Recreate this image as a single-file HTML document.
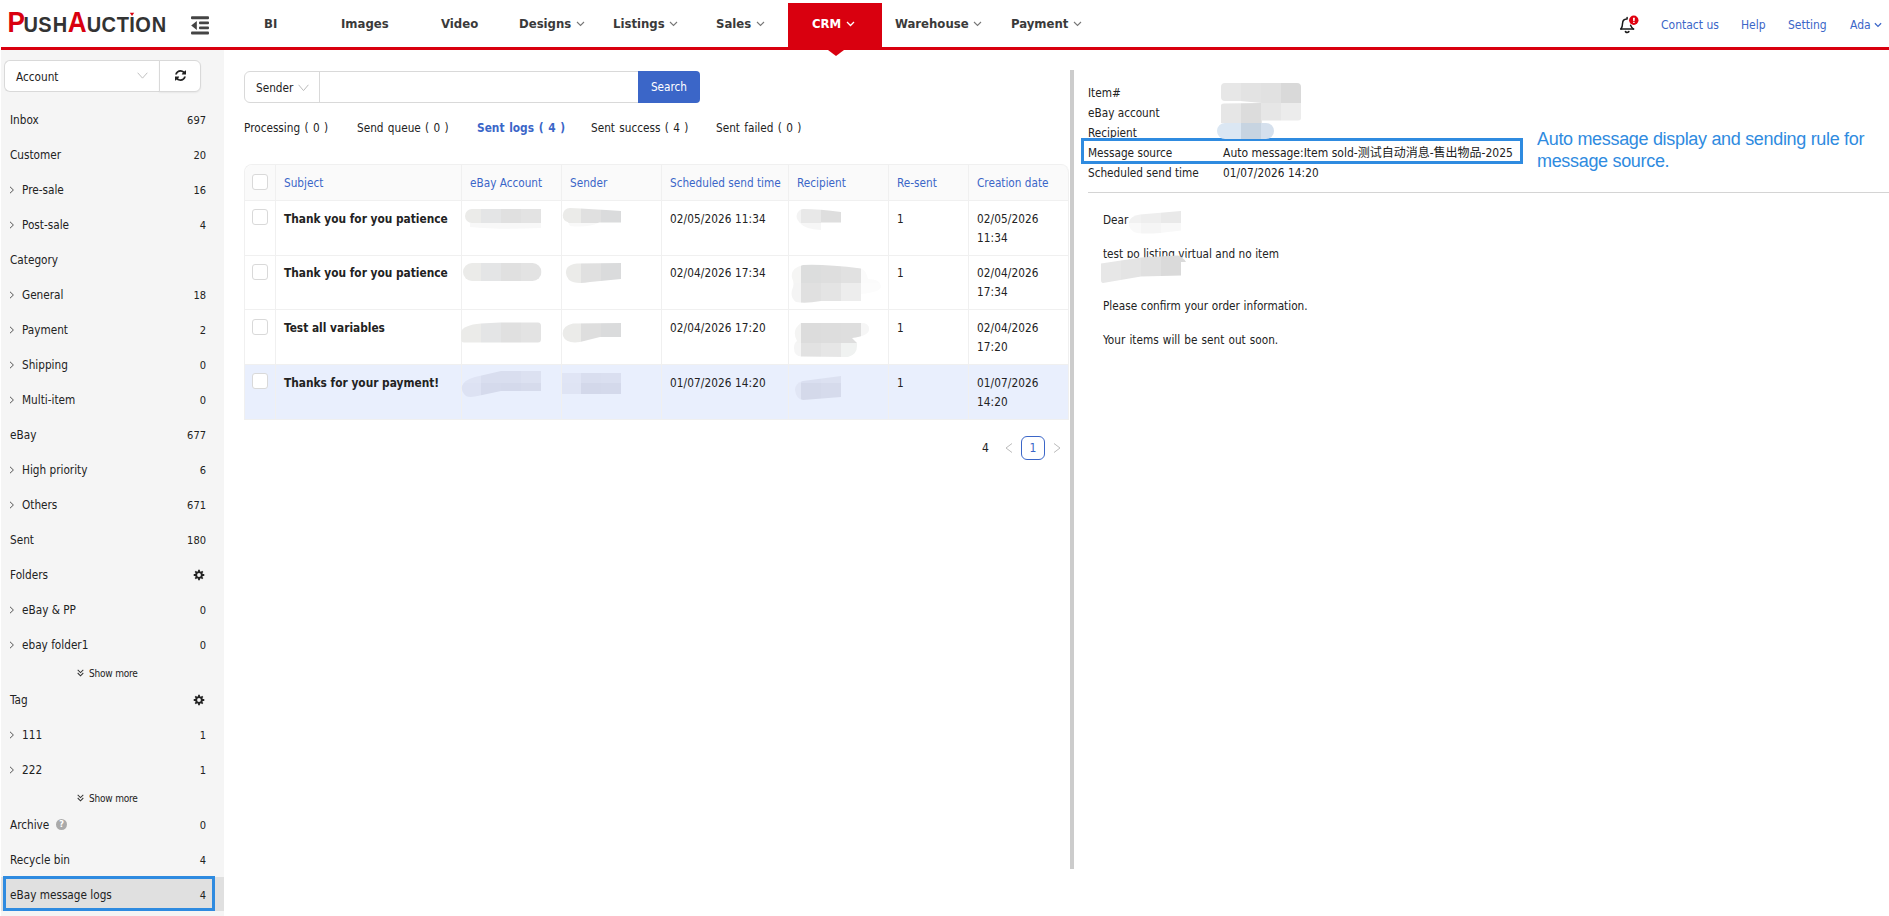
<!DOCTYPE html>
<html lang="en">
<head>
<meta charset="utf-8">
<title>PushAuction - CRM - eBay message logs</title>
<style>
*{box-sizing:border-box;margin:0;padding:0}
html,body{width:1889px;height:916px;overflow:hidden;background:#fff}
body{position:relative;font-family:"DejaVu Sans Condensed","Liberation Sans","Noto Sans CJK SC",sans-serif;font-size:11.7px;color:#222;line-height:14px}
.abs{position:absolute}
/* header */
#hdr{position:absolute;left:0;top:0;width:1889px;height:50px;background:#fff}
#redline{position:absolute;left:1px;top:47px;width:1888px;height:3px;background:#d9000f}
#logo{position:absolute;left:0;top:0}
.nav{position:absolute;top:0;height:47px;font-family:"DejaVu Sans Condensed","Liberation Sans",sans-serif;font-weight:bold;font-size:13px;color:#3a3a3a;white-space:nowrap;line-height:47px}
.nav svg{margin-left:4.5px;vertical-align:middle;position:relative;top:-1px}
#crm{position:absolute;left:788px;top:3px;width:94px;height:45px;background:#d9000f}
#crmtri{position:absolute;left:828px;top:50px;width:0;height:0;border-left:8px solid transparent;border-right:8px solid transparent;border-top:6px solid #d9000f}
.toplink{position:absolute;top:18px;color:#3b66c8;font-size:12px;white-space:nowrap}
/* sidebar */
#side{position:absolute;left:1px;top:50px;width:223px;height:866px;background:#f5f5f5}
.si{position:absolute;left:0;width:223px;height:35px;line-height:37px;white-space:nowrap;color:#222}
.si .t{position:absolute;left:9px}
.si.sub .t{left:21px}
.si .n{position:absolute;right:18px;font-size:11px}
.si .ch{position:absolute;left:8px;top:14px}
#acct{position:absolute;left:3px;top:10px;width:156px;height:32px;border:1px solid #d9d9d9;border-right:0;border-radius:6px 0 0 6px;background:#fff;line-height:32px}
#acct span{position:absolute;left:11px}
#refresh{position:absolute;left:158px;top:10px;width:42px;height:32px;border:1px solid #d9d9d9;border-radius:0 6px 6px 0;background:#fff;box-shadow:0 1px 2px rgba(0,0,0,.06)}
.si .gear{position:absolute;left:192.3px;top:11.7px}
.si .q{position:absolute;left:55px;top:12px;width:11px;height:11px;border-radius:50%;background:#aaa;color:#fff;font-size:9px;font-weight:bold;line-height:11px;text-align:center}
.si.sel{background:#e0e0e0;height:34px}
.si.sel:before{content:"";box-sizing:border-box;position:absolute;left:2px;top:-1px;width:212px;height:35px;border:3px solid #2f8be0}
.more{position:absolute;left:0;width:223px;height:20px;line-height:20px;font-size:10px;letter-spacing:-.2px;color:#222;padding-left:76px;white-space:nowrap}
#search{position:absolute;left:244px;top:71px;width:456px;height:32px}
#search .sel{position:absolute;left:0;top:0;width:76px;height:32px;border:1px solid #d9d9d9;border-radius:6px 0 0 6px;line-height:32px;padding-left:11px;white-space:nowrap}
#search .inp{position:absolute;left:75px;top:0;width:320px;height:32px;border:1px solid #d9d9d9;border-right:0}
#search .btn{position:absolute;left:394px;top:0;width:62px;height:32px;background:#3b66c8;color:#fff;border-radius:0 4px 4px 0;text-align:center;line-height:33px}
.tab{position:absolute;top:121px;line-height:15px;white-space:nowrap;color:#222;word-spacing:1px}
.tab.act{color:#3b66c8;font-weight:bold;font-size:11.8px}
#tbl{position:absolute;left:244px;top:164px;width:824px;border-collapse:separate;border-spacing:0;table-layout:fixed;border-left:1px solid #f0f0f0;border-top:1px solid #f0f0f0;border-radius:8px 8px 0 0}
#tbl th{height:36px;background:#fafafa;color:#3b66c8;font-weight:normal;text-align:left;padding:0 8px;border-right:1px solid #f0f0f0;border-bottom:1px solid #f0f0f0;white-space:nowrap;vertical-align:middle}
#tbl th:first-child{border-top-left-radius:8px}
#tbl th:last-child{border-top-right-radius:8px}
#tbl td{height:55px;padding:9px 8px 0 8px;border-right:1px solid #f0f0f0;border-bottom:1px solid #f0f0f0;vertical-align:top;line-height:19px;color:#222}
#tbl td.b{font-weight:bold;font-size:11.8px;white-space:nowrap;padding-left:8px}
#tbl .c{padding:0;text-align:center}
#tbl td.c{padding-top:8px}
#tbl th.c{vertical-align:top;padding-top:9px}
#tbl tr.hl td{background:#e9effd}
#tbl tbody tr:nth-child(2) td{height:54px;padding-top:8px}
#tbl tbody tr:nth-child(2) td.c{padding-top:8px}
#tbl tbody tr:nth-child(3) td.c{padding-top:9px}
#tbl td.d{letter-spacing:.1px}
.cb{display:block;width:16px;height:16px;border:1px solid #d9d9d9;border-radius:3px;background:#fff;margin:0 auto}
.blob{position:absolute}
.lbl{position:absolute;left:1088px;line-height:15px;white-space:nowrap;color:#222}
.val{position:absolute;left:1223px;line-height:15px;white-space:nowrap;color:#222}
#hlbox{position:absolute;left:1081px;top:138px;width:442px;height:26px;border:3px solid #2f8be0}
#note{position:absolute;left:1537px;top:128px;font-family:"Liberation Sans",sans-serif;font-size:18px;line-height:22px;letter-spacing:-0.32px;color:#2f8be0;white-space:nowrap}
.msg{position:absolute;left:1103px;line-height:15px;white-space:nowrap;color:#222;word-spacing:.8px}
#blobs{position:absolute;left:0;top:0;pointer-events:none}
</style>
</head>
<body>
<div id="hdr"></div>
<div id="redline"></div>
<svg id="logo" width="175" height="46" viewBox="0 0 175 46"><text transform="scale(0.89,1)" y="32" text-anchor="middle" font-family="Liberation Sans, sans-serif" font-weight="bold" fill="#333"><tspan x="18.31" fill="#d9000f" font-size="29.4">P</tspan><tspan x="34.55" font-size="22.5">U</tspan><tspan x="50.62" font-size="22.5">S</tspan><tspan x="67.47" font-size="22.5">H</tspan><tspan x="86.69" fill="#d9000f" font-size="29.4">A</tspan><tspan x="105.56" font-size="22.5">U</tspan><tspan x="122.25" font-size="22.5">C</tspan><tspan x="138.09" font-size="22.5">T</tspan><tspan x="148.48" font-size="22.5">I</tspan><tspan x="160.84" font-size="22.5">O</tspan><tspan x="178.71" font-size="22.5">N</tspan></text><path d="M129.8 12.8 L134.2 12.8 L132 16 Z" fill="#d9000f"/></svg>
<svg class="abs" style="left:190px;top:15px" width="20" height="21" viewBox="0 0 20 21"><g fill="#444"><rect x="1" y="1.3" width="18" height="3" rx="1"/><rect x="9" y="6.6" width="10" height="2.6" rx="1"/><rect x="9" y="11.6" width="10" height="2.6" rx="1"/><rect x="1" y="16.4" width="18" height="3" rx="1"/><path d="M1.2 10.4 L6.8 6 L6.8 14.9 Z"/></g></svg>
<div id="crm"></div><div id="crmtri"></div>
<div class="nav" style="left:264px">BI</div>
<div class="nav" style="left:341px">Images</div>
<div class="nav" style="left:441px">Video</div>
<div class="nav" style="left:519px">Designs<svg width="9" height="6" viewBox="0 0 9 6"><path d="M1 1 L4.5 4.5 L8 1" fill="none" stroke="#777" stroke-width="1.1"/></svg></div>
<div class="nav" style="left:613px">Listings<svg width="9" height="6" viewBox="0 0 9 6"><path d="M1 1 L4.5 4.5 L8 1" fill="none" stroke="#777" stroke-width="1.1"/></svg></div>
<div class="nav" style="left:716px">Sales<svg width="9" height="6" viewBox="0 0 9 6"><path d="M1 1 L4.5 4.5 L8 1" fill="none" stroke="#777" stroke-width="1.1"/></svg></div>
<div class="nav" style="left:812px;color:#fff">CRM<svg width="9" height="6" viewBox="0 0 9 6"><path d="M1 1 L4.5 4.5 L8 1" fill="none" stroke="#fff" stroke-width="1.3"/></svg></div>
<div class="nav" style="left:895px">Warehouse<svg width="9" height="6" viewBox="0 0 9 6"><path d="M1 1 L4.5 4.5 L8 1" fill="none" stroke="#777" stroke-width="1.1"/></svg></div>
<div class="nav" style="left:1011px">Payment<svg width="9" height="6" viewBox="0 0 9 6"><path d="M1 1 L4.5 4.5 L8 1" fill="none" stroke="#777" stroke-width="1.1"/></svg></div>
<svg class="abs" id="bell" style="left:1610px;top:8px" width="40" height="32" viewBox="0 0 40 32"><g fill="none" stroke="#1a1a1a" stroke-width="1.5" stroke-linecap="round" stroke-linejoin="round"><path d="M10.7 21.1 L23.6 21.1"/><path d="M11 21 C12.1 19.4 12.5 17.6 12.6 15 C12.7 12.6 14.2 11.2 16.6 11 L17.1 11 L17.1 9.6"/><path d="M20.6 17.2 C21.2 18.7 22 19.9 23.4 21"/><path d="M15.5 23.6 Q17.1 25.4 18.8 23.6" stroke-width="1.7"/></g><circle cx="23.8" cy="12.2" r="4.7" fill="#e0000f"/><path d="M22.9 9.7 L24.9 9.7 L24.6 13.3 L23.2 13.3 Z M23.2 14 L24.6 14 L24.6 15.1 L23.2 15.1 Z" fill="#fff"/></svg>
<div class="toplink" style="left:1661px">Contact us</div>
<div class="toplink" style="left:1741px">Help</div>
<div class="toplink" style="left:1788px">Setting</div>
<div class="toplink" style="left:1850px">Ada<svg width="8" height="6" viewBox="0 0 9 6" style="margin-left:3px;position:relative;top:-1px"><path d="M1 1 L4.5 4.5 L8 1" fill="none" stroke="#3b66c8" stroke-width="1.4"/></svg></div>
<div id="side">
<div id="acct"><span>Account</span><svg class="abs" style="left:132px;top:11px" width="11" height="7.5" viewBox="0 0 12 8"><path d="M0.7 0.7 L6 6.6 L11.3 0.7" fill="none" stroke="#bbb" stroke-width="1"/></svg></div>
<div id="refresh"><svg width="11" height="11" viewBox="0 0 1536 1536" style="position:absolute;left:14.5px;top:9px"><path fill="#222" d="M1511 928q0 5-1 7-64 268-268 434.500T764 1536q-146 0-282.500-55T238 1324l-129 129q-19 19-45 19t-45-19-19-45V960q0-26 19-45t45-19h448q26 0 45 19t19 45-19 45l-137 137q71 66 161 102t187 36q134 0 250-65t186-179q11-17 53-117 8-23 30-23h192q13 0 22.500 9.500t9.500 22.500zm25-800v448q0 26-19 45t-45 19h-448q-26 0-45-19t-19-45 19-45l138-138Q969 256 768 256q-134 0-250 65T332 500q-11 17-53 117-8 23-30 23H50q-13 0-22.500-9.500T18 608v-7q65-268 270-434.500T768 0q146 0 284 55.500T1297 212l130-129q19-19 45-19t45 19 19 45z"/></svg></div>
<div class="si" style="top:52px"><span class="t">Inbox</span><span class="n">697</span></div>
<div class="si" style="top:87px"><span class="t">Customer</span><span class="n">20</span></div>
<div class="si sub" style="top:122px"><svg class="ch" width="6" height="8" viewBox="0 0 6 8"><path d="M1 0.8 L4.4 4 L1 7.2" fill="none" stroke="#555" stroke-width="1"/></svg><span class="t">Pre-sale</span><span class="n">16</span></div>
<div class="si sub" style="top:157px"><svg class="ch" width="6" height="8" viewBox="0 0 6 8"><path d="M1 0.8 L4.4 4 L1 7.2" fill="none" stroke="#555" stroke-width="1"/></svg><span class="t">Post-sale</span><span class="n">4</span></div>
<div class="si" style="top:192px"><span class="t">Category</span></div>
<div class="si sub" style="top:227px"><svg class="ch" width="6" height="8" viewBox="0 0 6 8"><path d="M1 0.8 L4.4 4 L1 7.2" fill="none" stroke="#555" stroke-width="1"/></svg><span class="t">General</span><span class="n">18</span></div>
<div class="si sub" style="top:262px"><svg class="ch" width="6" height="8" viewBox="0 0 6 8"><path d="M1 0.8 L4.4 4 L1 7.2" fill="none" stroke="#555" stroke-width="1"/></svg><span class="t">Payment</span><span class="n">2</span></div>
<div class="si sub" style="top:297px"><svg class="ch" width="6" height="8" viewBox="0 0 6 8"><path d="M1 0.8 L4.4 4 L1 7.2" fill="none" stroke="#555" stroke-width="1"/></svg><span class="t">Shipping</span><span class="n">0</span></div>
<div class="si sub" style="top:332px"><svg class="ch" width="6" height="8" viewBox="0 0 6 8"><path d="M1 0.8 L4.4 4 L1 7.2" fill="none" stroke="#555" stroke-width="1"/></svg><span class="t">Multi-item</span><span class="n">0</span></div>
<div class="si" style="top:367px"><span class="t">eBay</span><span class="n">677</span></div>
<div class="si sub" style="top:402px"><svg class="ch" width="6" height="8" viewBox="0 0 6 8"><path d="M1 0.8 L4.4 4 L1 7.2" fill="none" stroke="#555" stroke-width="1"/></svg><span class="t">High priority</span><span class="n">6</span></div>
<div class="si sub" style="top:437px"><svg class="ch" width="6" height="8" viewBox="0 0 6 8"><path d="M1 0.8 L4.4 4 L1 7.2" fill="none" stroke="#555" stroke-width="1"/></svg><span class="t">Others</span><span class="n">671</span></div>
<div class="si" style="top:472px"><span class="t">Sent</span><span class="n">180</span></div>
<div class="si" style="top:507px"><span class="t">Folders</span><svg class="gear" width="12" height="12" viewBox="-6 -6 12 12"><path fill="#222" fill-rule="evenodd" d="M-0.94 -3.78 L-0.88 -5.28 L0.88 -5.28 L0.94 -3.78 L2.01 -3.34 L3.11 -4.35 L4.35 -3.11 L3.34 -2.01 L3.78 -0.94 L5.28 -0.88 L5.28 0.88 L3.78 0.94 L3.34 2.01 L4.35 3.11 L3.11 4.35 L2.01 3.34 L0.94 3.78 L0.88 5.28 L-0.88 5.28 L-0.94 3.78 L-2.01 3.34 L-3.11 4.35 L-4.35 3.11 L-3.34 2.01 L-3.78 0.94 L-5.28 0.88 L-5.28 -0.88 L-3.78 -0.94 L-3.34 -2.01 L-4.35 -3.11 L-3.11 -4.35 L-2.01 -3.34 Z M1.90 0 A1.9 1.9 0 1 0 -1.90 0 A1.9 1.9 0 1 0 1.90 0 Z"/></svg></div>
<div class="si sub" style="top:542px"><svg class="ch" width="6" height="8" viewBox="0 0 6 8"><path d="M1 0.8 L4.4 4 L1 7.2" fill="none" stroke="#555" stroke-width="1"/></svg><span class="t">eBay &amp; PP</span><span class="n">0</span></div>
<div class="si sub" style="top:577px"><svg class="ch" width="6" height="8" viewBox="0 0 6 8"><path d="M1 0.8 L4.4 4 L1 7.2" fill="none" stroke="#555" stroke-width="1"/></svg><span class="t">ebay folder1</span><span class="n">0</span></div>
<div class="si" style="top:632px"><span class="t">Tag</span><svg class="gear" width="12" height="12" viewBox="-6 -6 12 12"><path fill="#222" fill-rule="evenodd" d="M-0.94 -3.78 L-0.88 -5.28 L0.88 -5.28 L0.94 -3.78 L2.01 -3.34 L3.11 -4.35 L4.35 -3.11 L3.34 -2.01 L3.78 -0.94 L5.28 -0.88 L5.28 0.88 L3.78 0.94 L3.34 2.01 L4.35 3.11 L3.11 4.35 L2.01 3.34 L0.94 3.78 L0.88 5.28 L-0.88 5.28 L-0.94 3.78 L-2.01 3.34 L-3.11 4.35 L-4.35 3.11 L-3.34 2.01 L-3.78 0.94 L-5.28 0.88 L-5.28 -0.88 L-3.78 -0.94 L-3.34 -2.01 L-4.35 -3.11 L-3.11 -4.35 L-2.01 -3.34 Z M1.90 0 A1.9 1.9 0 1 0 -1.90 0 A1.9 1.9 0 1 0 1.90 0 Z"/></svg></div>
<div class="si sub" style="top:667px"><svg class="ch" width="6" height="8" viewBox="0 0 6 8"><path d="M1 0.8 L4.4 4 L1 7.2" fill="none" stroke="#555" stroke-width="1"/></svg><span class="t">111</span><span class="n">1</span></div>
<div class="si sub" style="top:702px"><svg class="ch" width="6" height="8" viewBox="0 0 6 8"><path d="M1 0.8 L4.4 4 L1 7.2" fill="none" stroke="#555" stroke-width="1"/></svg><span class="t">222</span><span class="n">1</span></div>
<div class="si" style="top:757px"><span class="t">Archive</span><span class="q">?</span><span class="n">0</span></div>
<div class="si" style="top:792px"><span class="t">Recycle bin</span><span class="n">4</span></div>
<div class="si sel" style="top:827px"><span class="t">eBay message logs</span><span class="n">4</span></div>
<div class="more" style="top:614px"><svg width="7" height="8" viewBox="0 0 8 8" preserveAspectRatio="none" style="margin-right:5px"><path d="M0.8 0.8 L4 3.6 L7.2 0.8 M0.8 4 L4 6.8 L7.2 4" fill="none" stroke="#333" stroke-width="1.1"/></svg>Show more</div>
<div class="more" style="top:739px"><svg width="7" height="8" viewBox="0 0 8 8" preserveAspectRatio="none" style="margin-right:5px"><path d="M0.8 0.8 L4 3.6 L7.2 0.8 M0.8 4 L4 6.8 L7.2 4" fill="none" stroke="#333" stroke-width="1.1"/></svg>Show more</div>
</div>
<div id="main">
<div id="search"><div class="sel">Sender<svg width="11" height="8" viewBox="0 0 11 8" style="position:absolute;left:53px;top:12px"><path d="M0.6 0.8 L5.5 6.6 L10.4 0.8" fill="none" stroke="#bbb" stroke-width="1"/></svg></div><div class="inp"></div><div class="btn">Search</div></div>
<div class="tab" style="left:244px">Processing ( 0 )</div>
<div class="tab" style="left:357px">Send queue ( 0 )</div>
<div class="tab act" style="left:477px">Sent logs ( 4 )</div>
<div class="tab" style="left:591px">Sent success ( 4 )</div>
<div class="tab" style="left:716px">Sent failed ( 0 )</div>
<table id="tbl"><colgroup><col style="width:31px"><col style="width:186px"><col style="width:100px"><col style="width:100px"><col style="width:127px"><col style="width:100px"><col style="width:80px"><col style="width:100px"></colgroup>
<thead><tr><th class="c"><span class="cb"></span></th><th>Subject</th><th>eBay Account</th><th>Sender</th><th>Scheduled send time</th><th>Recipient</th><th>Re-sent</th><th>Creation date</th></tr></thead><tbody>
<tr><td class="c"><span class="cb"></span></td><td class="b">Thank you for you patience</td><td></td><td></td><td class="d">02/05/2026 11:34</td><td></td><td>1</td><td class="d">02/05/2026<br>11:34</td></tr>
<tr><td class="c"><span class="cb"></span></td><td class="b">Thank you for you patience</td><td></td><td></td><td class="d">02/04/2026 17:34</td><td></td><td>1</td><td class="d">02/04/2026<br>17:34</td></tr>
<tr><td class="c"><span class="cb"></span></td><td class="b">Test all variables</td><td></td><td></td><td class="d">02/04/2026 17:20</td><td></td><td>1</td><td class="d">02/04/2026<br>17:20</td></tr>
<tr class="hl"><td class="c"><span class="cb"></span></td><td class="b">Thanks for your payment!</td><td></td><td></td><td class="d">01/07/2026 14:20</td><td></td><td>1</td><td class="d">01/07/2026<br>14:20</td></tr>
</tbody></table>
<div class="abs" style="left:982px;top:441px;font-size:12px;line-height:15px;color:#222">4</div>
<svg class="abs" style="left:1005px;top:443px" width="8" height="10" viewBox="0 0 8 10"><path d="M7 0.5 L1 5 L7 9.5" fill="none" stroke="#bbb" stroke-width="1"/></svg>
<div class="abs" style="left:1021px;top:436px;width:24px;height:24px;border:1px solid #3b66c8;border-radius:6px;color:#3b66c8;text-align:center;line-height:23px;font-size:12px">1</div>
<svg class="abs" style="left:1053px;top:443px" width="8" height="10" viewBox="0 0 8 10"><path d="M1 0.5 L7 5 L1 9.5" fill="none" stroke="#bbb" stroke-width="1"/></svg>
<div class="abs" style="left:1070px;top:70px;width:4px;height:799px;background:#ccc"></div>
</div>
<div id="detail">
<div class="lbl" style="top:86px">Item#</div>
<div class="lbl" style="top:106px">eBay account</div>
<div class="lbl" style="top:126px">Recipient</div>
<div class="lbl" style="top:146px">Message source</div>
<div class="lbl" style="top:166px">Scheduled send time</div>
<div class="val" style="top:146px;font-size:12px">Auto message:Item sold-测试自动消息-售出物品-2025</div>
<div class="val" style="top:166px;letter-spacing:.1px">01/07/2026 14:20</div>
<div id="hlbox"></div>
<div id="note">Auto message display and sending rule for<br>message source.</div>
<div class="abs" style="left:1088px;top:192px;width:801px;height:1px;background:#d4d4d4"></div>
<div class="msg" style="top:213px">Dear</div>
<div class="msg" style="top:247px;word-spacing:.1px">test po listing virtual and no item</div>
<div class="msg" style="top:299px;word-spacing:.4px">Please confirm your order information.</div>
<div class="msg" style="top:333px">Your items will be sent out soon.</div>
</div>
<svg id="blobs" width="1889" height="916" viewBox="0 0 1889 916"><defs>
<clipPath id="ca1"><path d="M472 209 H541 V223 H472 A7 7 0 0 1 472 209Z"/><path d="M470 223 H541 V228 Q500 230 470 227Z"/></clipPath>
<clipPath id="ca2"><rect x="463" y="263" width="78.5" height="18" rx="9"/></clipPath>
<clipPath id="ca3"><path d="M461 332 Q463 325 481 323.5 L500 322.5 H538 Q541 322.5 541 326 V339 Q541 342.5 538 342.5 H464 Q461 342.5 461 339Z"/></clipPath>
<clipPath id="ca4"><path d="M501 371 H541 V391 H501 L480 395.5 Q470 398 466 396 Q461 392 462 386 Q464 380 475 377Z"/></clipPath>
<clipPath id="cs1"><path d="M570 208 Q590 209 621 211 V222.5 H570 A7.200 7.200 0 0 1 570 208Z"/><path d="M568 222 H600 Q590 228 570 226Z"/></clipPath>
<clipPath id="cs2"><path d="M577 263.5 L621 263 V279 L590 282 Q575 284.5 569 280 Q564 274 567 268 Q570 264 577 263.5Z"/></clipPath>
<clipPath id="cs3"><path d="M573 323.5 L621 323 V337 H600 L580 342 Q566 344 563 336 Q561 326 573 323.5Z"/></clipPath>
<clipPath id="cs4"><path d="M562 373 H621 V394 H562Z"/></clipPath>
<clipPath id="cr1"><path d="M803 209 Q820 209 841 212 V222.5 H821 V230 Q805 229 801 224 Q794 218 798 212 Q800 209 803 209Z"/></clipPath>
<clipPath id="cr2"><path d="M803 265 Q825 264 861 268.5 Q866 270 868 279 Q880 279 881 286 Q882 292 861 294 V301 H821 Q805 304 796 302 Q790 298 792 290 Q795 284 792 278 Q790 268 803 265Z"/></clipPath>
<clipPath id="cr3"><path d="M801 323 H861 Q870 323 869 330 Q868 336 852 338 L857 343 Q858 355 848 357 L801 356.5 Q794 356 794 348 Q794 343 797 341 Q791 330 801 323Z"/></clipPath>
<clipPath id="cr4"><path d="M841 376 V397 L803 400 Q796 399 795 390 Q795 383 803 381Z"/></clipPath>
<clipPath id="cp1"><path d="M1225 83 H1297 Q1301 83 1301 87 V103 H1262 L1240 101 H1225 Q1221 101 1221 97 V87 Q1221 83 1225 83Z"/></clipPath>
<clipPath id="cp2"><path d="M1221 105.5 Q1221 103.5 1224 103.5 L1262 103 H1301 V118 Q1301 120.5 1298 120.5 H1262 V123 H1221Z"/></clipPath>
<clipPath id="cp3"><path d="M1225 123 H1266 A8 8 0 0 1 1266 139 H1225 A8 8 0 0 1 1225 123Z"/></clipPath>
<clipPath id="cd1"><path d="M1181 211 V230.5 L1160 233 Q1140 234.5 1134 232 Q1128 228 1129 222 Q1130 216 1140 214.5Z"/></clipPath>
<clipPath id="cd2w"><path d="M1122 258 L1186 257.5 V263 H1122Z"/></clipPath>
<clipPath id="cd2"><path d="M1101 263.5 L1141 257.5 L1178 255.5 Q1184 258 1186 262 H1181 V275.5 L1141 276.5 L1103 283 Q1101 283 1101 280Z"/></clipPath>
</defs>
<g clip-path="url(#ca1)"><rect x="461" y="205" width="20" height="18" fill="#ebebe9"/><rect x="481" y="205" width="20" height="18" fill="#e4e5e6"/><rect x="501" y="205" width="20" height="18" fill="#e0e0e0"/><rect x="521" y="205" width="20" height="18" fill="#e3e3e3"/><rect x="461" y="223" width="20" height="9" fill="#f8f8f8"/><rect x="481" y="223" width="20" height="9" fill="#f8f8f8"/><rect x="501" y="223" width="20" height="9" fill="#f8f8f8"/><rect x="521" y="223" width="20" height="9" fill="#f8f8f8"/></g>
<g clip-path="url(#ca2)"><rect x="461" y="260" width="20" height="25" fill="#ebebe9"/><rect x="481" y="260" width="20" height="25" fill="#e4e5e6"/><rect x="501" y="260" width="20" height="25" fill="#e0e0e0"/><rect x="521" y="260" width="20.5" height="25" fill="#e3e3e3"/></g>
<g clip-path="url(#ca3)"><rect x="461" y="320" width="20" height="25" fill="#ebebe9"/><rect x="481" y="320" width="20" height="25" fill="#e4e5e6"/><rect x="501" y="320" width="20" height="25" fill="#e0e0e0"/><rect x="521" y="320" width="20" height="25" fill="#e3e3e3"/></g>
<g clip-path="url(#ca4)"><rect x="461" y="368" width="20" height="15" fill="#dfe4f4"/><rect x="481" y="368" width="20" height="15" fill="#d9deef"/><rect x="501" y="368" width="20" height="15" fill="#d9deef"/><rect x="521" y="368" width="20" height="15" fill="#dce1f1"/><rect x="461" y="383" width="20" height="17" fill="#dde2f3"/><rect x="481" y="383" width="20" height="17" fill="#d5daec"/><rect x="501" y="383" width="20" height="17" fill="#d4d9eb"/><rect x="521" y="383" width="20" height="17" fill="#d6dbec"/></g>
<g clip-path="url(#cs1)"><rect x="561" y="205" width="20" height="18" fill="#ebebe9"/><rect x="581" y="205" width="20" height="18" fill="#e0e0e0"/><rect x="601" y="205" width="20" height="18" fill="#dadbdc"/><rect x="561" y="223" width="20" height="7" fill="#f9f9f9"/><rect x="581" y="223" width="20" height="7" fill="#f9f9f9"/><rect x="601" y="223" width="20" height="7" fill="#f9f9f9"/></g>
<g clip-path="url(#cs2)"><rect x="561" y="260" width="20" height="26" fill="#ebebe9"/><rect x="581" y="260" width="20" height="26" fill="#e0e0e0"/><rect x="601" y="260" width="20" height="26" fill="#dadbdc"/></g>
<g clip-path="url(#cs3)"><rect x="561" y="320" width="20" height="25" fill="#ebebe9"/><rect x="581" y="320" width="20" height="25" fill="#dedede"/><rect x="601" y="320" width="20" height="25" fill="#dadbdc"/></g>
<g clip-path="url(#cs4)"><rect x="561" y="370" width="20" height="13" fill="#e0e5f5"/><rect x="581" y="370" width="20" height="13" fill="#d9deef"/><rect x="601" y="370" width="20" height="13" fill="#dadff0"/><rect x="561" y="383" width="20" height="13" fill="#dfe4f4"/><rect x="581" y="383" width="20" height="13" fill="#d3d8ea"/><rect x="601" y="383" width="20" height="13" fill="#d4d9eb"/></g>
<g clip-path="url(#cr1)"><rect x="791" y="205" width="10" height="18" fill="#f3f3f3"/><rect x="801" y="205" width="20" height="18" fill="#e8e8e8"/><rect x="821" y="205" width="20" height="18" fill="#dedede"/><rect x="791" y="223" width="10" height="9" fill="#f8f8f8"/><rect x="801" y="223" width="20" height="9" fill="#f6f6f6"/></g>
<g clip-path="url(#cr2)"><rect x="790" y="262" width="11" height="21" fill="#f5f5f4"/><rect x="801" y="262" width="20" height="21" fill="#dcdddd"/><rect x="821" y="262" width="20" height="21" fill="#dedede"/><rect x="841" y="262" width="20" height="21" fill="#e1e1e1"/><rect x="861" y="262" width="22" height="21" fill="#fbfbfb"/><rect x="790" y="283" width="11" height="22" fill="#f4f4f4"/><rect x="801" y="283" width="20" height="22" fill="#e0e0e0"/><rect x="821" y="283" width="20" height="22" fill="#e4e4e4"/><rect x="841" y="283" width="20" height="22" fill="#ededed"/><rect x="861" y="283" width="22" height="22" fill="#fcfcfc"/></g>
<g clip-path="url(#cr3)"><rect x="790" y="320" width="11" height="23" fill="#f4f4f3"/><rect x="801" y="320" width="20" height="23" fill="#dcdcdc"/><rect x="821" y="320" width="20" height="23" fill="#dddddd"/><rect x="841" y="320" width="20" height="23" fill="#dedede"/><rect x="861" y="320" width="10" height="23" fill="#f6f6f6"/><rect x="790" y="343" width="11" height="17" fill="#f5f5f5"/><rect x="801" y="343" width="20" height="17" fill="#e2e2e2"/><rect x="821" y="343" width="20" height="17" fill="#e6e6e6"/><rect x="841" y="343" width="20" height="17" fill="#f0f2f1"/></g>
<g clip-path="url(#cr4)"><rect x="791" y="373" width="10" height="10" fill="#e3e8f6"/><rect x="801" y="373" width="20" height="10" fill="#dadff0"/><rect x="821" y="373" width="20" height="10" fill="#dce1f1"/><rect x="791" y="383" width="10" height="19" fill="#e1e6f5"/><rect x="801" y="383" width="20" height="19" fill="#d4d9ea"/><rect x="821" y="383" width="20" height="19" fill="#d6dbec"/></g>
<g clip-path="url(#cp1)"><rect x="1221" y="80" width="20" height="23" fill="#e7e7e7"/><rect x="1241" y="80" width="20" height="23" fill="#e3e3e3"/><rect x="1261" y="80" width="20" height="23" fill="#e1e1e1"/><rect x="1281" y="80" width="20" height="23" fill="#d9d9d9"/></g>
<g clip-path="url(#cp2)"><rect x="1221" y="103" width="20" height="20" fill="#e6e6e6"/><rect x="1241" y="103" width="20" height="20" fill="#dcdcdc"/><rect x="1261" y="103" width="20" height="20" fill="#e6e6e6"/><rect x="1281" y="103" width="20" height="20" fill="#ececec"/></g>
<g clip-path="url(#cp3)"><rect x="1215" y="122" width="26" height="18" fill="#dbe7f3"/><rect x="1241" y="122" width="20" height="18" fill="#c7d4e1"/><rect x="1261" y="122" width="15" height="18" fill="#d5e0ed"/></g>
<g clip-path="url(#cd1)"><rect x="1121" y="208" width="20" height="15" fill="#f1f1f1"/><rect x="1141" y="208" width="20" height="15" fill="#eeeeee"/><rect x="1161" y="208" width="20" height="15" fill="#e9e9e9"/><rect x="1121" y="223" width="20" height="13" fill="#f9f9f9"/><rect x="1141" y="223" width="20" height="13" fill="#f5f5f5"/><rect x="1161" y="223" width="20" height="13" fill="#f8f8f8"/></g>
<g clip-path="url(#cd2w)"><rect x="1120" y="250" width="70" height="12" fill="#ffffff"/></g>
<g clip-path="url(#cd2)"><rect x="1101" y="252" width="20" height="34" fill="#e7e7e7"/><rect x="1121" y="252" width="20" height="34" fill="#e4e4e4"/><rect x="1141" y="252" width="20" height="34" fill="#e0e0e0"/><rect x="1161" y="252" width="26" height="34" fill="#dadada"/></g>
</svg>
</body>
</html>
